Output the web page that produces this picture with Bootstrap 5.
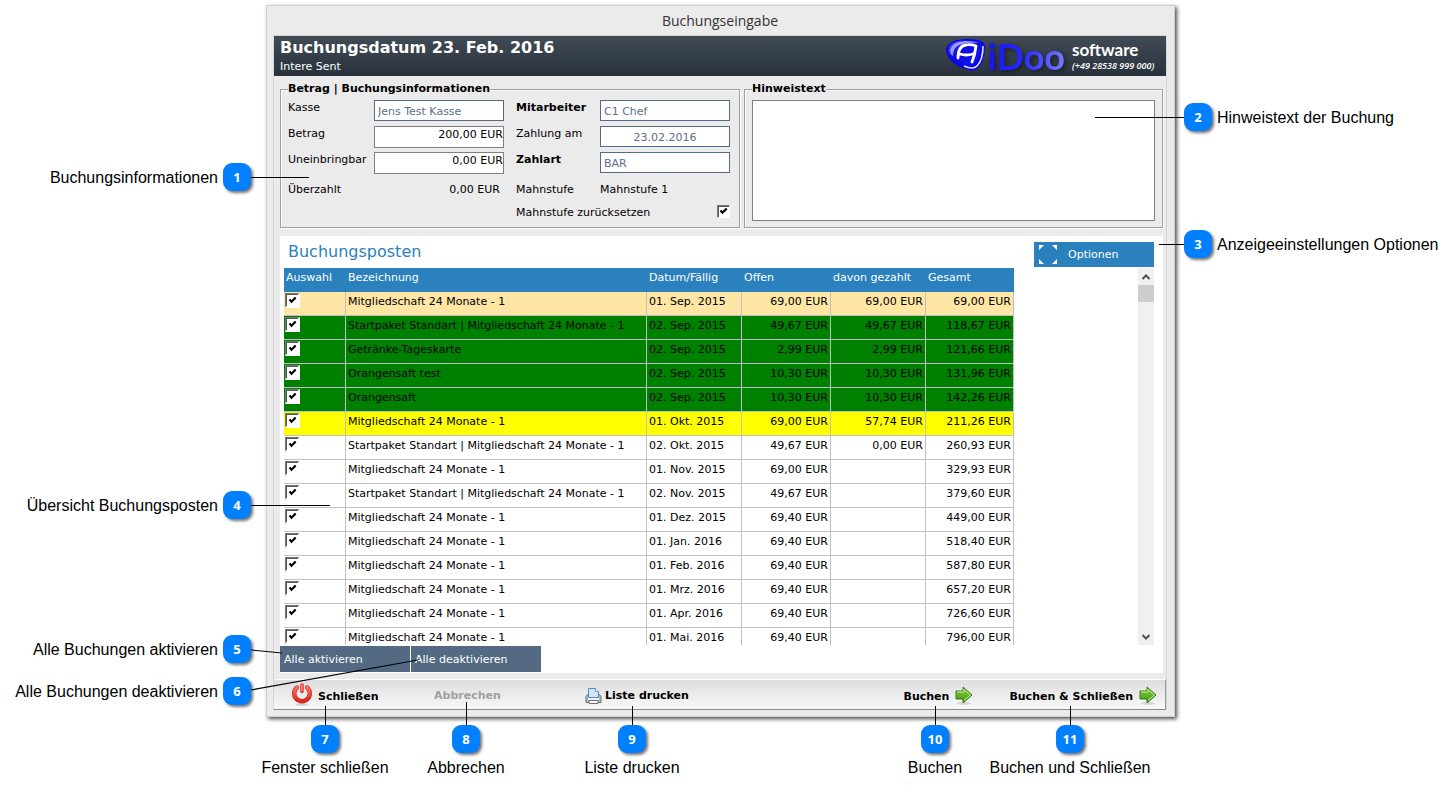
<!DOCTYPE html>
<html lang="de">
<head>
<meta charset="utf-8">
<meta name="viewport" content="width=device-width, initial-scale=1">
<title>Buchungseingabe</title>
<link href="https://cdn.jsdelivr.net/npm/bootstrap@5.3.0/dist/css/bootstrap.min.css" rel="stylesheet">
<style>
  body { background: #fff; color: #000; font: 16px/20px "Liberation Sans", Arial, sans-serif; }
  .help-page { display: grid; grid-template-columns: 266px minmax(780px, 1fr) 281px; padding-top: 5px; }

  /* callouts */
  .callout { position: relative; display: flex; align-items: center; gap: 5px; height: 28px; white-space: nowrap; }
  .callout-num { flex: none; width: 28px; height: 28px; border-radius: 9px; background: #007fff; color: #fff; box-shadow: 2px 2px 3px rgba(0,0,0,.55); font: 700 13px/28px "Noto Sans", sans-serif; text-align: center; }
  .callouts-left { padding: 158px 15px 0 0; align-items: flex-end; }
  .callouts-right { padding: 98px 0 0 9px; }
  .callout-text { padding-top: 2px; }
  .callouts-left .lead-svg { left: 100%; }
  .lead-svg { position: absolute; z-index: 2; overflow: visible; pointer-events: none; }
  .gap-four { margin-top: 300px; }
  .gap-five { margin-top: 116px; }
  .gap-six { margin-top: 14px; }
  .gap-three { margin-top: 99px; }
  .callouts-bottom { grid-column: 2; display: grid; grid-template-columns: 118px 164px 168px 1fr 60px 210px; padding-top: 8px; }
  .callout-down { position: relative; display: flex; flex-direction: column; align-items: center; gap: 5px; white-space: nowrap; }
  .callout-down::before { content: ""; position: absolute; z-index: 2; bottom: 100%; width: 1px; height: 19px; background: #000; }
  .callout-down.line-tall::before { height: 23px; }

  /* application window */
  .app-window { font: 11px/14px "DejaVu Sans", Verdana, sans-serif; background: #ebebeb; border: 1px solid #cfcfcf; box-shadow: 2px 2px 4px rgba(0,0,0,.7); padding: 0 7px 6px 6px; }
  .app-title { font: 14px/29px "Open Sans", "Segoe UI", sans-serif; color: #333; }
  .app-frame { border: 1px solid #d6d6d6; border-bottom: 0; }
  .app-head { height: 40px; padding: 0 11px 0 6px; background: linear-gradient(#414b56, #29323c); color: #fff; }
  .app-head h1 { font-size: 16px; line-height: 24px; font-weight: 700; margin: 0; }
  .brand-name { font: 700 36px/40px Lato, sans-serif; background: linear-gradient(100deg, #1414f0, #2626ff 45%, #8080ff); background-clip: text; -webkit-background-clip: text; color: transparent; filter: drop-shadow(2px 2px 2px #111a); }
  .brand-side { width: 90px; padding: 4px 0 0 7px; white-space: nowrap; }
  .brand-soft { font: 700 17px/20px Lato, sans-serif; }
  .brand-tel { font: italic 600 9px/12px "Open Sans", sans-serif; }
  .app-body { padding: 6px 3px 6px 6px; }

  .group-box { border: 1px solid #a0a0a0; box-shadow: inset 1px 1px 0 #fff, 1px 1px 0 #fff; padding: 4px 7px 6px; height: 146px; min-width: 0; }
  .group-box legend { float: none; width: auto; font-size: 11px; line-height: 14px; font-weight: 700; background: #ebebeb; margin: 0; padding: 0; }
  .group-info { flex: 0 0 460px; }
  .booking-grid { display: grid; grid-template-columns: 86px 130px 96px 130px; grid-template-rows: 26px 26px 26px 27px 20px; }
  .booking-grid > label, .booking-grid > span { padding-top: 1px; }
  .booking-grid > .row-late { padding-top: 5px; }
  .label-mid { padding-left: 12px; }
  .field { width: 100%; height: 22px; border: 1px solid #808080; border-radius: 0; background: #fff; color: #000; padding: 0 0 5px; font: inherit; text-align: right; }
  .field-locked { height: 21px; border-color: #546a87; color: #5d6f89; padding: 1px 3px 0; text-align: left; }
  .note-field { height: 121px; resize: none; display: block; }
  .tick { appearance: none; width: 13px; height: 13px; margin: 0; display: block; border: 1px solid; border-color: #777 #fff #fff #777; box-shadow: inset 1px 1px 0 #555; border-radius: 0; background: #fff; }
  .tick:checked { background: #fff url("data:image/svg+xml,%3Csvg xmlns='http://www.w3.org/2000/svg' viewBox='0 0 11 11'%3E%3Cpath d='M2.5 4.500L4.500 6.700L8.700 2.500' fill='none' stroke='%23000' stroke-width='2.2'/%3E%3C/svg%3E") center / 11px 11px no-repeat; }
  .posts-table .tick { width: 15px; height: 15px; border-width: 1px 2px 2px 1px; }

  .posts-panel { background: #fff; height: 437px; margin-top: 8px; padding-top: 6px; }
  .posts-title { color: #2a81bd; font-size: 16px; line-height: 20px; margin: 0; }
  .btn-flat { border: 0; border-radius: 0; background: #2a81bd; color: #fff; font-size: 11px; line-height: 14px; text-align: left; }
  .btn-options { width: 120px; height: 25px; margin-right: 9px; padding: 0 5px; gap: 11px; }
  .btn-slate { width: 130px; height: 26px; background: #546a82; padding: 1px 4px 0; }
  .posts-view { height: 377px; margin: 1px 9px 1px 4px; overflow: hidden; }
  .posts-scroll { padding-right: 124px; }
  .posts-table { width: 100%; table-layout: fixed; border-collapse: separate; border-spacing: 0; }
  .posts-table th { background: #2a81bd; color: #fff; font-weight: 400; height: 24px; padding: 3px 2px 0; vertical-align: top; white-space: nowrap; }
  .posts-table td { height: 24px; padding: 3px 2px 0; vertical-align: top; border-right: 1px solid #c0c0c0; border-bottom: 1px solid #c0c0c0; white-space: nowrap; }
  .posts-table td:first-child { padding: 1px 0 0 1px; }
  .posts-table td:nth-child(n+4) { text-align: right; }
  .tr-sand td { background: #ffe6a5; }
  .tr-green td { background: #008000; }
  .tr-yellow td { background: #ff0; }
  .bar-track { flex: none; width: 16px; background: #f0f0f0; }
  .bar-thumb { height: 17px; background: #cdcdcd; }

  .app-tools { height: 31px; padding: 0 8px 0 17px; border-top: 1px solid #fff; border-bottom: 1px solid #8a8a8a; border-right: 1px solid #999; background: linear-gradient(#dedede, #f8f8f8); }
  .tool { border: 0; background: none; padding: 2px 0 0; font-size: 11px; line-height: 14px; font-weight: 700; color: #000; display: flex; align-items: center; white-space: nowrap; }
  .tool:disabled { color: #a0a0a0; }
  .tool-close { width: 143px; gap: 5px; padding: 0; }
  .tool-cancel { width: 151px; }
  .tool-print { gap: 3px; }
  .tool-book { gap: 6px; padding: 0; }
  .tools-right { gap: 36px; }
</style>
</head>
<body>
<div class="help-page">
  <aside class="callouts-left d-flex flex-column">
    <div class="callout"><span class="callout-text">Buchungsinformationen</span><span class="callout-num">1</span><svg class="lead-svg" width="58" height="28"><path d="M0 14.500H58" stroke="#000"/></svg></div>
    <div class="callout gap-four"><span class="callout-text">Übersicht Buchungsposten</span><span class="callout-num">4</span><svg class="lead-svg" width="79" height="28"><path d="M0 14.500H79" stroke="#000"/></svg></div>
    <div class="callout gap-five"><span class="callout-text">Alle Buchungen aktivieren</span><span class="callout-num">5</span><svg class="lead-svg" width="31" height="28"><path d="M0 15L31 18" stroke="#000"/></svg></div>
    <div class="callout gap-six"><span class="callout-text">Alle Buchungen deaktivieren</span><span class="callout-num">6</span><svg class="lead-svg" width="167" height="28"><path d="M0 13L167 -17" stroke="#000" stroke-width="1.2"/></svg></div>
  </aside>

  <main class="app-window">
    <div class="app-title text-center">Buchungseingabe</div>
    <div class="app-frame">
      <header class="app-head d-flex justify-content-between">
        <div>
          <h1>Buchungsdatum 23. Feb. 2016</h1>
          <div>Intere Sent</div>
        </div>
        <div class="d-flex">
          <svg width="42" height="40" viewBox="0 0 42 40" aria-hidden="true">
            <defs><linearGradient id="gem" x1="0" y1="0" x2="1" y2="1"><stop offset="0" stop-color="#5050ff"/><stop offset=".4" stop-color="#0c0ce0"/><stop offset="1" stop-color="#1414f4"/></linearGradient></defs>
            <path d="M0 14Q1 4 19 3Q40 2 39 12Q38 27 32 32Q28 37 20 33Q1 27 0 14Z" fill="#0808e8"/>
            <path d="M37 10Q37 24 31 30Q27 34 18 30" fill="none" stroke="#e0e0ff" stroke-width="1.600"/>
            <path d="M2 14Q3 5 19 4.500Q36 4 35 11Q34 23 28 27Q24 31 19 28Q3 24 2 14Z" fill="url(#gem)"/>
            <path d="M4 15Q5 6 19 5Q29 5 33 7Q17 6 10 11Q7 14 7 20Q4 18 4 15Z" fill="#c4c4ff" opacity=".75"/>
            <path d="M12 22Q12 10 20 9Q25 8 30 10Q29 19 26 26M14 18Q20 20 27 18" fill="none" stroke="#fff" stroke-width="2.800" stroke-linecap="round" stroke-linejoin="round"/>
          </svg>
          <span class="brand-name">iDoo</span>
          <div class="brand-side">
            <div class="brand-soft">software</div>
            <div class="brand-tel">(+49 28538 999 000)</div>
          </div>
        </div>
      </header>

      <div class="app-body">
        <div class="d-flex gap-1">
          <fieldset class="group-box group-info">
            <legend>Betrag | Buchungsinformationen</legend>
            <div class="booking-grid">
              <label for="kasse">Kasse</label>
              <input id="kasse" class="field field-locked" value="Jens Test Kasse" readonly>
              <label for="mitarbeiter" class="label-mid fw-bold">Mitarbeiter</label>
              <input id="mitarbeiter" class="field field-locked" value="C1 Chef" readonly>
              <label for="betrag">Betrag</label>
              <input id="betrag" class="field" value="200,00 EUR">
              <label for="zahlung" class="label-mid">Zahlung am</label>
              <input id="zahlung" class="field field-locked text-center" value="23.02.2016" readonly>
              <label for="unein">Uneinbringbar</label>
              <input id="unein" class="field" value="0,00 EUR">
              <label for="zahlart" class="label-mid fw-bold">Zahlart</label>
              <input id="zahlart" class="field field-locked" value="BAR" readonly>
              <span class="row-late">Überzahlt</span>
              <span class="row-late text-end pe-1">0,00 EUR</span>
              <span class="row-late label-mid">Mahnstufe</span>
              <span class="row-late">Mahnstufe 1</span>
              <span></span><span></span>
              <label for="reset" class="label-mid text-nowrap">Mahnstufe zurücksetzen</label>
              <input id="reset" type="checkbox" class="tick ms-auto" checked>
            </div>
          </fieldset>
          <fieldset class="group-box flex-fill">
            <legend id="hinweis">Hinweistext</legend>
            <textarea class="field note-field text-start" aria-labelledby="hinweis"></textarea>
          </fieldset>
        </div>

        <section class="posts-panel">
          <div class="d-flex justify-content-between">
            <h2 class="posts-title ms-2">Buchungsposten</h2>
            <button type="button" class="btn-flat btn-options d-flex align-items-center">
              <svg width="18" height="19" viewBox="0 0 18 19" fill="#fff" aria-hidden="true"><path d="M0 0H5L0 5ZM18 0V5L13 0ZM0 19V14L5 19ZM18 19H13L18 14Z"/></svg>
              Optionen
            </button>
          </div>
          <div class="posts-view d-flex">
            <div class="posts-scroll flex-fill">
              <table class="posts-table">
                <colgroup><col style="width:62px"><col><col style="width:95px"><col style="width:89px"><col style="width:95px"><col style="width:88px"></colgroup>
                <thead><tr><th>Auswahl</th><th>Bezeichnung</th><th>Datum/Fällig</th><th>Offen</th><th>davon gezahlt</th><th>Gesamt</th></tr></thead>
                <tbody>
                  <tr class="tr-sand"><td><input type="checkbox" class="tick" aria-label="Auswahl" checked></td><td>Mitgliedschaft 24 Monate - 1</td><td>01. Sep. 2015</td><td>69,00 EUR</td><td>69,00 EUR</td><td>69,00 EUR</td></tr>
                  <tr class="tr-green"><td><input type="checkbox" class="tick" aria-label="Auswahl" checked></td><td>Startpaket Standart | Mitgliedschaft 24 Monate - 1</td><td>02. Sep. 2015</td><td>49,67 EUR</td><td>49,67 EUR</td><td>118,67 EUR</td></tr>
                  <tr class="tr-green"><td><input type="checkbox" class="tick" aria-label="Auswahl" checked></td><td>Getränke-Tageskarte</td><td>02. Sep. 2015</td><td>2,99 EUR</td><td>2,99 EUR</td><td>121,66 EUR</td></tr>
                  <tr class="tr-green"><td><input type="checkbox" class="tick" aria-label="Auswahl" checked></td><td>Orangensaft test</td><td>02. Sep. 2015</td><td>10,30 EUR</td><td>10,30 EUR</td><td>131,96 EUR</td></tr>
                  <tr class="tr-green"><td><input type="checkbox" class="tick" aria-label="Auswahl" checked></td><td>Orangensaft</td><td>02. Sep. 2015</td><td>10,30 EUR</td><td>10,30 EUR</td><td>142,26 EUR</td></tr>
                  <tr class="tr-yellow"><td><input type="checkbox" class="tick" aria-label="Auswahl" checked></td><td>Mitgliedschaft 24 Monate - 1</td><td>01. Okt. 2015</td><td>69,00 EUR</td><td>57,74 EUR</td><td>211,26 EUR</td></tr>
                  <tr><td><input type="checkbox" class="tick" aria-label="Auswahl" checked></td><td>Startpaket Standart | Mitgliedschaft 24 Monate - 1</td><td>02. Okt. 2015</td><td>49,67 EUR</td><td>0,00 EUR</td><td>260,93 EUR</td></tr>
                  <tr><td><input type="checkbox" class="tick" aria-label="Auswahl" checked></td><td>Mitgliedschaft 24 Monate - 1</td><td>01. Nov. 2015</td><td>69,00 EUR</td><td></td><td>329,93 EUR</td></tr>
                  <tr><td><input type="checkbox" class="tick" aria-label="Auswahl" checked></td><td>Startpaket Standart | Mitgliedschaft 24 Monate - 1</td><td>02. Nov. 2015</td><td>49,67 EUR</td><td></td><td>379,60 EUR</td></tr>
                  <tr><td><input type="checkbox" class="tick" aria-label="Auswahl" checked></td><td>Mitgliedschaft 24 Monate - 1</td><td>01. Dez. 2015</td><td>69,40 EUR</td><td></td><td>449,00 EUR</td></tr>
                  <tr><td><input type="checkbox" class="tick" aria-label="Auswahl" checked></td><td>Mitgliedschaft 24 Monate - 1</td><td>01. Jan. 2016</td><td>69,40 EUR</td><td></td><td>518,40 EUR</td></tr>
                  <tr><td><input type="checkbox" class="tick" aria-label="Auswahl" checked></td><td>Mitgliedschaft 24 Monate - 1</td><td>01. Feb. 2016</td><td>69,40 EUR</td><td></td><td>587,80 EUR</td></tr>
                  <tr><td><input type="checkbox" class="tick" aria-label="Auswahl" checked></td><td>Mitgliedschaft 24 Monate - 1</td><td>01. Mrz. 2016</td><td>69,40 EUR</td><td></td><td>657,20 EUR</td></tr>
                  <tr><td><input type="checkbox" class="tick" aria-label="Auswahl" checked></td><td>Mitgliedschaft 24 Monate - 1</td><td>01. Apr. 2016</td><td>69,40 EUR</td><td></td><td>726,60 EUR</td></tr>
                  <tr><td><input type="checkbox" class="tick" aria-label="Auswahl" checked></td><td>Mitgliedschaft 24 Monate - 1</td><td>01. Mai. 2016</td><td>69,40 EUR</td><td></td><td>796,00 EUR</td></tr>
                </tbody>
              </table>
            </div>
            <div class="bar-track d-flex flex-column">
              <svg width="16" height="17" viewBox="0 0 16 17" aria-hidden="true"><path d="M4.500 11L8 7.500L11.500 11" fill="none" stroke="#505050" stroke-width="2"/></svg>
              <div class="bar-thumb"></div>
              <svg class="mt-auto" width="16" height="17" viewBox="0 0 16 17" aria-hidden="true"><path d="M4.500 7L8 10.500L11.500 7" fill="none" stroke="#505050" stroke-width="2"/></svg>
            </div>
          </div>
          <div class="d-flex" style="gap:1px">
            <button type="button" class="btn-flat btn-slate">Alle aktivieren</button>
            <button type="button" class="btn-flat btn-slate">Alle deaktivieren</button>
          </div>
        </section>
      </div>

      <footer class="app-tools d-flex">
        <button type="button" class="tool tool-close">
          <svg width="22" height="26" viewBox="0 0 22 26" aria-hidden="true">
            <defs><linearGradient id="red" x1="0" y1="0" x2="0" y2="1"><stop offset="0" stop-color="#ff7060"/><stop offset="1" stop-color="#e02418"/></linearGradient></defs>
            <ellipse cx="11" cy="22.500" rx="7" ry="1.500" fill="#000" opacity=".13"/>
            <path d="M6 5.500A7.800 7.800 0 1 0 16 5.500" fill="none" stroke="#c8261c" stroke-width="4.400" stroke-linecap="round"/>
            <path d="M6 5.500A7.800 7.800 0 1 0 16 5.500" fill="none" stroke="url(#red)" stroke-width="3.200" stroke-linecap="round"/>
            <path d="M11 3V10" stroke="#ececec" stroke-width="5"/>
            <path d="M11 3V9.500" stroke="#d8342a" stroke-width="3.600" stroke-linecap="round"/>
            <path d="M11 3V9" stroke="#ff8a7c" stroke-width="1.500" stroke-linecap="round"/>
          </svg>
          <span class="pt-1">Schließen</span>
        </button>
        <button type="button" class="tool tool-cancel" disabled>Abbrechen</button>
        <button type="button" class="tool tool-print">
          <svg width="17" height="18" viewBox="0 0 17 18" aria-hidden="true">
            <path d="M2.500 7.500H14.500L16 9.500V15.500H1V9.500Z" fill="#b4bac4" stroke="#68707c"/>
            <path d="M3.500 10.500V1.500H10.500L13.500 4.500V10.500Z" fill="#cfe4fa" stroke="#5b87bd"/>
            <path d="M10.500 1.500V4.500H13.500" fill="#fff" stroke="#5b87bd" stroke-width=".8"/>
            <path d="M3 11H14V13H3Z" fill="#eef0f4"/>
            <path d="M4 13.500H13V16.500H4Z" fill="#fff" stroke="#6a717d"/>
          </svg>
          Liste drucken
        </button>
        <div class="tools-right d-flex ms-auto">
          <button type="button" class="tool tool-book"><span class="pt-1">Buchen</span>
            <svg width="18" height="20" viewBox="0 0 18 20" aria-hidden="true"><defs><linearGradient id="leaf" x1="0" y1="0" x2="0" y2="1"><stop offset="0" stop-color="#8ccc40"/><stop offset="1" stop-color="#3f9a12"/></linearGradient></defs><ellipse cx="9" cy="18.500" rx="7" ry="1.500" opacity=".12"/><path d="M1 6H8V2L17 10L8 18V14H1Z" fill="url(#leaf)" stroke="#37781a"/><path d="M2 7H9V4.500L15.500 10L9 15.500" fill="none" stroke="#c8f090" stroke-width=".9"/></svg>
          </button>
          <button type="button" class="tool tool-book"><span class="pt-1">Buchen &amp; Schließen</span>
            <svg width="18" height="20" viewBox="0 0 18 20" aria-hidden="true"><ellipse cx="9" cy="18.500" rx="7" ry="1.500" opacity=".12"/><path d="M1 6H8V2L17 10L8 18V14H1Z" fill="url(#leaf)" stroke="#37781a"/><path d="M2 7H9V4.500L15.500 10L9 15.500" fill="none" stroke="#c8f090" stroke-width=".9"/></svg>
          </button>
        </div>
      </footer>
    </div>
  </main>

  <aside class="callouts-right">
    <div class="callout"><svg class="lead-svg start-0" width="1" height="28"><path d="M-89 14.500H0" stroke="#000"/></svg><span class="callout-num">2</span><span class="callout-text">Hinweistext der Buchung</span></div>
    <div class="callout gap-three"><svg class="lead-svg start-0" width="1" height="28"><path d="M-25 14.500H0" stroke="#000"/></svg><span class="callout-num">3</span><span class="callout-text">Anzeigeeinstellungen Optionen</span></div>
  </aside>

  <div class="callouts-bottom">
    <div class="callout-down"><span class="callout-num">7</span><span>Fenster schließen</span></div>
    <div class="callout-down line-tall"><span class="callout-num">8</span><span>Abbrechen</span></div>
    <div class="callout-down"><span class="callout-num">9</span><span>Liste drucken</span></div>
    <span></span>
    <div class="callout-down"><span class="callout-num">10</span><span>Buchen</span></div>
    <div class="callout-down"><span class="callout-num">11</span><span>Buchen und Schließen</span></div>
  </div>
</div>
<script src="https://cdn.jsdelivr.net/npm/bootstrap@5.3.0/dist/js/bootstrap.bundle.min.js"></script>
</body>
</html>
